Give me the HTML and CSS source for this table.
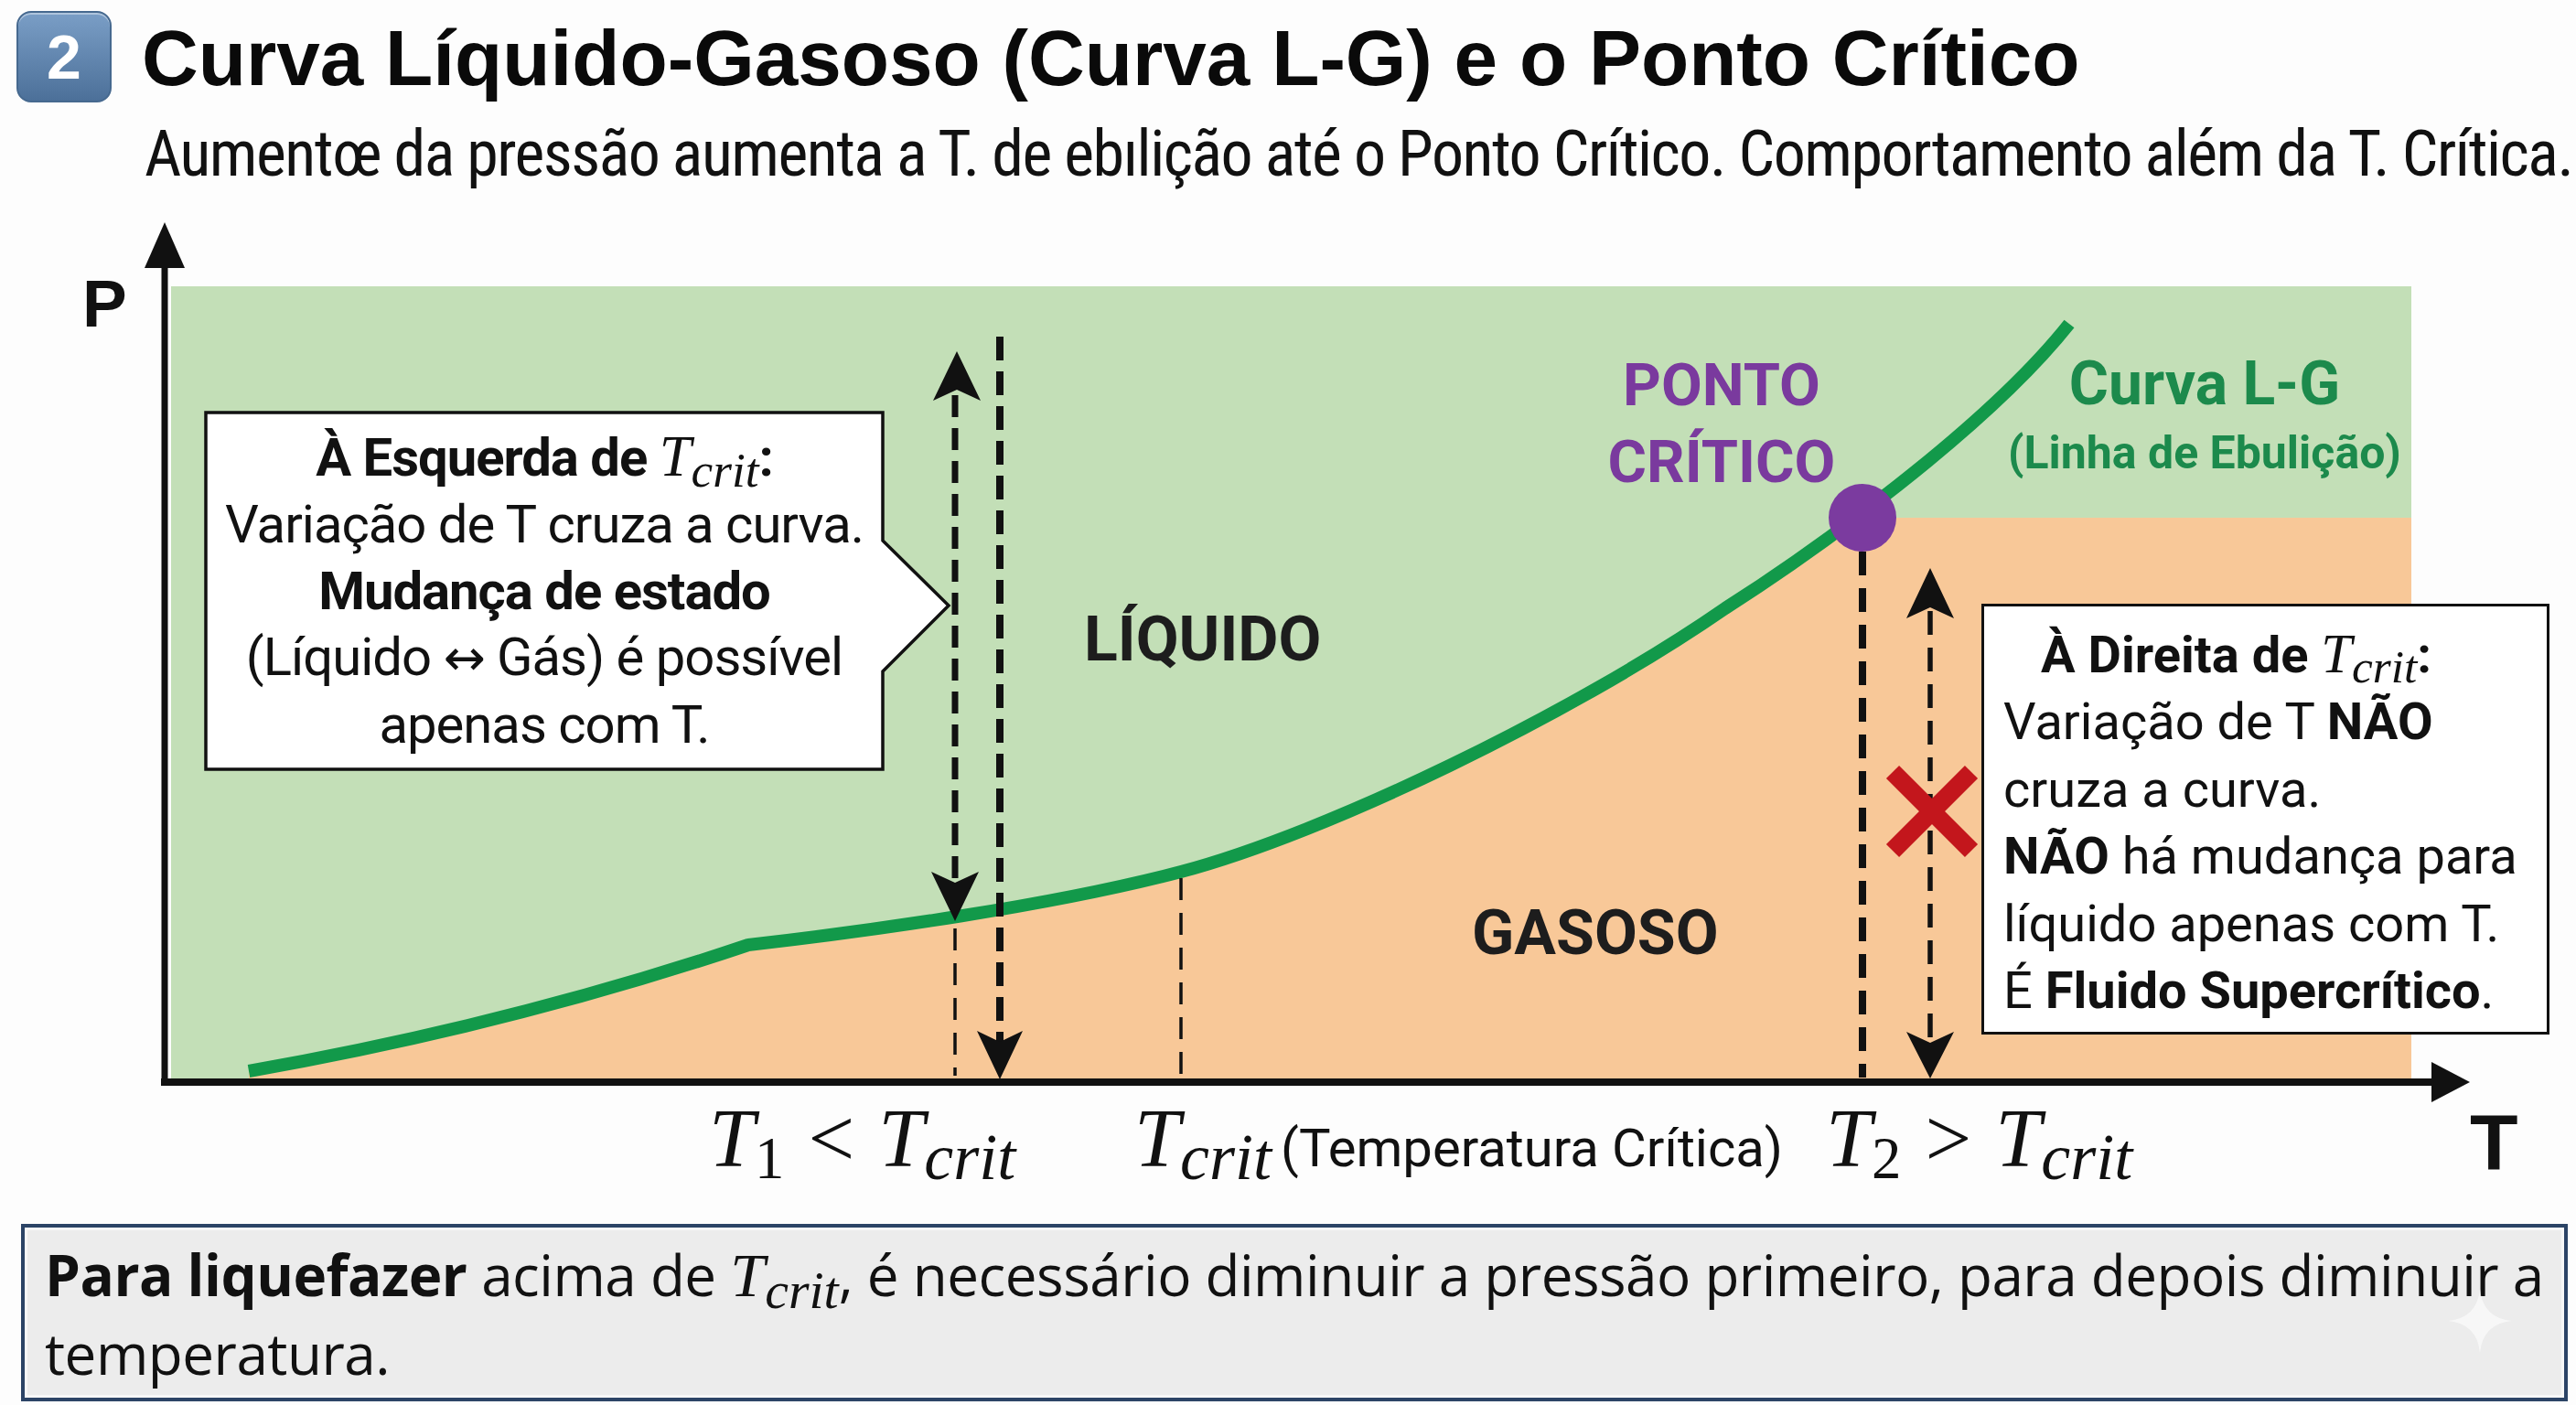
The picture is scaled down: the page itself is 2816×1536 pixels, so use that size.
FILE: index.html
```html
<!DOCTYPE html>
<html lang="pt">
<head>
<meta charset="utf-8">
<title>Curva Líquido-Gasoso e o Ponto Crítico</title>
<link rel="stylesheet" href="styles.css">
</head>
<body>
<header class="header">
  <div class="title-row">
    <div class="badge">2</div>
    <h1 class="title">Curva Líquido-Gasoso (Curva L-G) e o Ponto Crítico</h1>
  </div>
  <p class="subtitle">Aumentœ da pressão aumenta a T. de ebılição até o Ponto Crítico. Comportamento além da T. Crítica.</p>
</header>

<section class="chart">
  <svg class="plot" width="2816" height="1113" viewBox="0 225 2816 1113" xmlns="http://www.w3.org/2000/svg">
    <rect x="187" y="313" width="2449" height="869" fill="#c3dfb7"/>
    <path fill="#f8c898" d="M272 1182 L272 1171 Q560 1120 818 1033 C950 1018 1150 990 1291 953 C1450 911 1720 780 1886 665 L2036 566 L2636 566 L2636 1182 Z"/>
    <path fill="none" stroke="#12994a" stroke-width="14" d="M272 1171 Q560 1120 818 1033 C950 1018 1150 990 1291 953 C1450 911 1720 780 1886 665 C1980 605 2170 470 2262 354"/>

    <path d="M225 451 H965 V591 L1037 662 L965 734 V841 H225 Z" fill="#ffffff" stroke="#111" stroke-width="3.5"/>

    <g stroke="#111" fill="none">
      <line x1="1044" y1="432" x2="1044" y2="962" stroke-width="7" stroke-dasharray="24 12"/>
      <line x1="1044" y1="1015" x2="1044" y2="1176" stroke-width="3.5" stroke-dasharray="24 14"/>
      <line x1="1093" y1="368" x2="1093" y2="1140" stroke-width="8" stroke-dasharray="26 12"/>
      <line x1="1291" y1="960" x2="1291" y2="1176" stroke-width="3.5" stroke-dasharray="24 14"/>
      <line x1="2036" y1="603" x2="2036" y2="1178" stroke-width="8" stroke-dasharray="26 14"/>
      <line x1="2110" y1="668" x2="2110" y2="1138" stroke-width="5.5" stroke-dasharray="26 14"/>
    </g>
    <g fill="#111">
      <polygon points="1046,384 1072,438 1046,426 1020,438"/>
      <polygon points="1044,1007 1018,953 1044,965 1070,953"/>
      <polygon points="1093,1180 1068,1127 1093,1139 1118,1127"/>
      <polygon points="2110,621 2136,676 2110,664 2084,676"/>
      <polygon points="2110,1179 2084,1128 2110,1140 2136,1128"/>
    </g>

    <g stroke="#111">
      <line x1="180" y1="285" x2="180" y2="1186" stroke-width="7"/>
      <line x1="176" y1="1183" x2="2662" y2="1183" stroke-width="8"/>
    </g>
    <g fill="#111">
      <polygon points="180,243 202,293 158,293"/>
      <polygon points="2700,1183 2658,1161 2658,1205"/>
    </g>

    <circle cx="2036" cy="566" r="37" fill="#7b3b9f"/>

    <g stroke="#c3161c" stroke-width="20">
      <line x1="2069" y1="844" x2="2155" y2="930"/>
      <line x1="2155" y1="844" x2="2069" y2="930"/>
    </g>
  </svg>

  <div class="lbl axis-p">P</div>
  <div class="lbl axis-t">T</div>
  <div class="lbl region liq">LÍQUIDO</div>
  <div class="lbl region gas">GASOSO</div>
  <div class="lbl ponto">PONTO<br>CRÍTICO</div>
  <div class="lbl curva"><div class="curva-a">Curva L-G</div><div class="curva-b">(Linha de Ebulição)</div></div>

  <div class="lbl lbox">
    <b>À Esquerda de <span class="m">T<sub>crit</sub></span>:</b><br>
    Variação de T cruza a curva.<br>
    <b>Mudança de estado</b><br>
    (Líquido <span class="arrow">↔</span> Gás) é possível<br>
    apenas com T.
  </div>

  <div class="lbl rbox">
    <div class="rhead"><b>À Direita de <span class="m">T<sub>crit</sub></span>:</b></div>
    Variação de T <b>NÃO</b><br>
    cruza a curva.<br>
    <b>NÃO</b> há mudança para<br>
    líquido apenas com T.<br>
    É <b>Fluido Supercrítico</b>.
  </div>

  <div class="lbl xl xl1"><i>T</i><sub>1</sub><span class="op">&lt;</span><i>T</i><sub class="it">crit</sub></div>
  <div class="lbl xl xl2"><i>T</i><sub class="it">crit</sub><span class="xtext">(Temperatura Crítica)</span></div>
  <div class="lbl xl xl3"><i>T</i><sub>2</sub><span class="op">&gt;</span><i>T</i><sub class="it">crit</sub></div>
</section>

<div class="note">
  <b>Para liquefazer</b> acima de <span class="m">T<sub>crit</sub></span>, é necessário diminuir a pressão primeiro, para depois diminuir a<br>temperatura.
  <svg class="sparkle" width="70" height="70" viewBox="-35 -35 70 70" xmlns="http://www.w3.org/2000/svg"><path d="M0 -35 Q3 -3 35 0 Q3 3 0 35 Q-3 3 -35 0 Q-3 -3 0 -35 Z" fill="#ffffff" opacity="0.6"/></svg>
</div>
</body>
</html>
```

FILE: styles.css
```css
html, body {
  margin: 0;
  padding: 0;
}

body {
  width: 2816px;
  height: 1536px;
  overflow: hidden;
  background: #fdfdfd;
  color: #111;
  font-family: Roboto, "Liberation Sans", sans-serif;
}

.header {
  height: 225px;
  box-sizing: border-box;
  padding: 12px 0 0 18px;
}

.title-row {
  display: flex;
  align-items: flex-start;
}

.badge {
  width: 104px;
  height: 100px;
  box-sizing: border-box;
  border-radius: 16px;
  border: 2px solid #46698f;
  background: linear-gradient(#7a9ec6, #4c7099);
  box-shadow: inset 0 2px 0 rgba(255, 255, 255, 0.4);
  color: #fff;
  font: bold 68px/1 "Liberation Sans", Arial, sans-serif;
  display: flex;
  align-items: center;
  justify-content: center;
}

.title {
  margin: 2px 0 0 33px;
  font: bold 85.5px/100px "Liberation Sans", Arial, sans-serif;
  color: #0a0a0a;
  white-space: nowrap;
}

.subtitle {
  margin: 14px 0 0 140px;
  font: 70px/80px "Liberation Sans Narrow", "Roboto Condensed", "DejaVu Sans Condensed", sans-serif;
  letter-spacing: -1.5px;
  color: #111;
  white-space: nowrap;
}

.chart {
  position: relative;
  height: 1113px;
}

.plot {
  display: block;
}

.lbl {
  position: absolute;
  white-space: nowrap;
  line-height: 1;
}

.axis-p {
  left: 90px;
  top: 70px;
  font: bold 73px/73px "Liberation Sans", Arial, sans-serif;
}

.axis-t {
  left: 2700px;
  top: 980px;
  font: bold 86px/86px "Liberation Sans", Arial, sans-serif;
}

.region {
  font: bold 68px/68px Roboto, "Liberation Sans", sans-serif;
  color: #1d1d1d;
}

.liq {
  left: 1185px;
  top: 440px;
}

.gas {
  left: 1609px;
  top: 761px;
}

.ponto {
  left: 1740px;
  top: 154px;
  width: 284px;
  text-align: center;
  font: bold 65px/84px Roboto, "Liberation Sans", sans-serif;
  color: #7a3a9e;
}

.curva {
  left: 2170px;
  top: 162px;
  width: 480px;
  text-align: center;
  font-family: Roboto, "Liberation Sans", sans-serif;
  font-weight: bold;
  color: #1c8a4c;
}

.curva-a {
  font-size: 66px;
  line-height: 66px;
}

.curva-b {
  font-size: 50px;
  line-height: 84px;
}

.lbox {
  left: 225px;
  top: 238px;
  width: 740px;
  text-align: center;
  font: 58px/72.75px Roboto, "Liberation Sans", sans-serif;
  letter-spacing: -1px;
}

.arrow {
  font-family: "DejaVu Sans", sans-serif;
  font-size: 0.95em;
}

.rbox {
  left: 2166px;
  top: 435px;
  width: 621px;
  height: 471px;
  box-sizing: border-box;
  border: 3.5px solid #111;
  background: #fff;
  padding: 15px 0 0 21px;
  font: 56px/73.4px Roboto, "Liberation Sans", sans-serif;
}

.rhead {
  padding-left: 41px;
}

.m {
  font-family: "Liberation Serif", "Times New Roman", serif;
  font-style: italic;
  font-weight: normal;
  font-size: 1.08em;
  letter-spacing: 0;
}

.m sub {
  font-size: 0.85em;
  vertical-align: -0.22em;
  line-height: 0;
}

.xl {
  top: 975px;
  font: 90px/90px "Liberation Serif", "Times New Roman", serif;
}

.xl i {
  font-style: italic;
}

.xl sub {
  font-size: 0.72em;
  vertical-align: -0.2em;
  line-height: 0;
}

.xl sub.it {
  font-style: italic;
  font-size: 0.8em;
}

.xl .op {
  margin: 0 26px;
}

.xl1 {
  left: 775px;
}

.xl2 {
  left: 1240px;
}

.xl3 {
  left: 1996px;
}

.xtext {
  margin-left: 10px;
  font: 58px/1 Roboto, "Liberation Sans", sans-serif;
}

.note {
  position: relative;
  margin-left: 23px;
  width: 2784px;
  height: 194px;
  box-sizing: border-box;
  border: 4px solid #2c4466;
  background: #ececec;
  box-shadow: inset 0 0 0 3px #f7f7f7;
  padding: 9px 0 0 22px;
  font: 62px/85px "Open Sans", "Noto Sans", sans-serif;
  letter-spacing: -0.5px;
  color: #111;
  white-space: nowrap;
}

.note .m {
  font-size: 1.1em;
}

.sparkle {
  position: absolute;
  left: 2649px;
  top: 67px;
}
```
